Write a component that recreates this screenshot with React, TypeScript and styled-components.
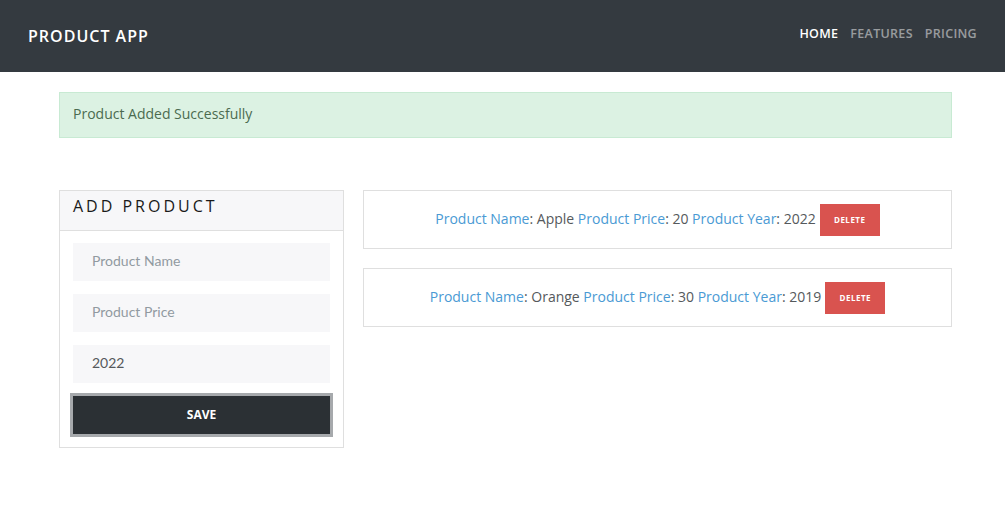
import React from "react";
import styled, { createGlobalStyle } from "styled-components";

const GlobalStyle = createGlobalStyle`
  body {
    margin: 0;
    font-family: "Open Sans", "Noto Sans", sans-serif;
    background: #fff;
    color: #55595c;
  }
  * { box-sizing: border-box; }
`;

const products = [
  { name: "Apple", price: 20, year: 2022 },
  { name: "Orange", price: 30, year: 2019 },
];

const App: React.FC = () => {
  return (
    <>
      <GlobalStyle />
      <Navbar>
        <Brand>PRODUCT APP</Brand>
        <NavLinks>
          <NavLink active>HOME</NavLink>
          <NavLink>FEATURES</NavLink>
          <NavLink>PRICING</NavLink>
        </NavLinks>
      </Navbar>
      <Container>
        <Alert>Product Added Successfully</Alert>
        <Row>
          <Card>
            <CardHeader>ADD PRODUCT</CardHeader>
            <CardBody>
              <Input type="text" placeholder="Product Name" />
              <Input type="text" placeholder="Product Price" />
              <Input type="text" defaultValue="2022" />
              <SaveButton>SAVE</SaveButton>
            </CardBody>
          </Card>
          <List>
            {products.map((p) => (
              <ProductItem key={p.name}>
                <ItemText>
                  <Label>Product Name</Label>: {p.name}{" "}
                  <Label>Product Price</Label>: {p.price}{" "}
                  <Label>Product Year</Label>: {p.year}
                </ItemText>
                <DeleteButton>DELETE</DeleteButton>
              </ProductItem>
            ))}
          </List>
        </Row>
      </Container>
    </>
  );
};

const Navbar = styled.nav`
  height: 72px;
  background: #343a40;
  display: flex;
  align-items: center;
  justify-content: space-between;
  padding: 0 28px;
`;

const Brand = styled.div`
  color: #fff;
  font-size: 16px;
  font-weight: 600;
  letter-spacing: 1px;
`;

const NavLinks = styled.div`
  display: flex;
  gap: 12px;
  margin-top: -5px;
`;

const NavLink = styled.a<{ active?: boolean }>`
  color: ${(p) => (p.active ? "#fff" : "rgba(255,255,255,0.5)")};
  font-size: 12.5px;
  font-weight: 600;
  letter-spacing: 0.3px;
  cursor: pointer;
`;

const Container = styled.div`
  margin: 20px 53px 0 59px;
`;

const Alert = styled.div`
  height: 46px;
  background: #dcf2e3;
  border: 1px solid #c8ead3;
  color: #4b6b50;
  font-size: 14px;
  display: flex;
  align-items: center;
  padding: 0 13px 3px;
`;

const Row = styled.div`
  display: grid;
  grid-template-columns: 285px 1fr;
  gap: 19px;
  margin-top: 52px;
  align-items: start;
`;

const Card = styled.div`
  border: 1px solid #dfdfdf;
`;

const CardHeader = styled.div`
  height: 40px;
  background: #f7f7f9;
  border-bottom: 1px solid #dfdfdf;
  padding: 4px 13px 0;
  font-size: 16px;
  font-weight: 500;
  letter-spacing: 3px;
  color: #1a1a1a;
`;

const CardBody = styled.div`
  padding: 12px 13px 10px;
  display: flex;
  flex-direction: column;
  gap: 13px;
`;

const Input = styled.input`
  height: 38px;
  border: none;
  outline: none;
  background: #f7f7f9;
  padding: 0 19px 3px;
  font-family: Lato, "Open Sans", sans-serif;
  font-size: 14px;
  color: #55595c;
  &::placeholder {
    color: #919aa1;
  }
`;

const SaveButton = styled.button`
  height: 44px;
  margin: -3px -3px 0;
  background: #2b3034;
  border: 3px solid #a6a9ac;
  color: #fff;
  font-family: inherit;
  font-size: 12px;
  font-weight: 700;
  padding-bottom: 2px;
  cursor: pointer;
`;

const List = styled.div`
  display: flex;
  flex-direction: column;
  gap: 19px;
`;

const ProductItem = styled.div`
  height: 59px;
  border: 1px solid #dfdfdf;
  display: flex;
  align-items: center;
  justify-content: center;
  padding-bottom: 3px;
  font-size: 14px;
  color: #55595c;
`;

const ItemText = styled.span`
  white-space: nowrap;
`;

const Label = styled.span`
  color: #4a9ad4;
`;

const DeleteButton = styled.button`
  margin-left: 4px;
  margin-top: 3px;
  width: 60px;
  height: 32px;
  background: #d9534f;
  border: none;
  color: #fff;
  font-family: inherit;
  font-size: 8px;
  font-weight: 700;
  letter-spacing: 0.5px;
  cursor: pointer;
`;

export default App;
